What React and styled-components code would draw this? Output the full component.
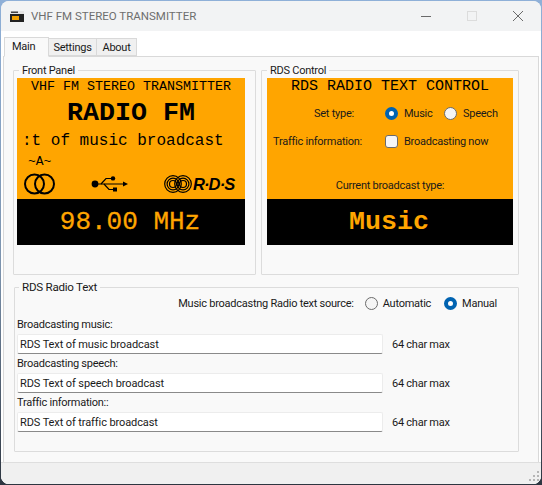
import React from 'react';
import styled, { createGlobalStyle } from 'styled-components';

const Global = createGlobalStyle`
  html, body { margin: 0; padding: 0; height: 100%; overflow: hidden; }
  body { width: 542px; height: 485px; background: linear-gradient(180deg, #8fb0d8 0%, #7c93ad 55%, #2d3540 100%); }
  * { box-sizing: border-box; }
`;

const Window = styled.div`
  width: 540px; height: 483px; margin-left: 1px; margin-top: 1px;
  display: flex; flex-direction: column; overflow: hidden;
  border-radius: 8px; background: #f3f3f3;
  font: 11px Roboto, "Liberation Sans", sans-serif; letter-spacing: -0.25px; color: #1a1a1a;
`;
const TitleBar = styled.div`
  height: 30px; flex: none; display: flex; align-items: center; padding: 0 0 0 9px; background: #f2f3f4;
`;
const Title = styled.span`
  margin-left: 7px; font-size: 11.5px; letter-spacing: 0; color: #6e6e6e; flex: 1;
`;
const WinButton = styled.div`
  width: 46px; height: 30px; display: flex; align-items: center; justify-content: center; color: ${p => p.$dim ? '#dcdcdc' : '#6a6a6a'};
`;
const Client = styled.div`
  flex: 1; display: flex; flex-direction: column; background: #fff; min-height: 0;
`;
const TabStrip = styled.div`
  height: 25px; flex: none; display: flex; align-items: flex-end; padding-left: 3px; position: relative; z-index: 1;
`;
const Tab = styled.div`
  height: ${p => p.$active ? '20px' : '18px'};
  width: ${p => p.$w}px;
  display: flex; align-items: center; justify-content: ${p => p.$active ? 'flex-start' : 'center'};
  background: ${p => p.$active ? '#f9f9f9' : '#f0f0f0'};
  border: 1px solid #d9d9d9;
  border-bottom: ${p => p.$active ? '1px solid #f9f9f9' : '1px solid #d9d9d9'};
  border-left: ${p => p.$active ? '1px solid #d9d9d9' : 'none'};
  margin-bottom: ${p => p.$active ? '-1px' : '0'};
  padding: ${p => p.$active ? '0 0 2px 7px' : '0'};
`;
const TabPanel = styled.div`
  flex: 1; margin: 0 2px; background: #f9f9f9; border: 1px solid #d9d9d9; border-bottom: none;
  padding: 7px 0 0 9px; min-height: 0; display: flex; flex-direction: column;
`;
const TopRow = styled.div`
  display: grid; grid-template-columns: 243px 258px; column-gap: 5px; height: 211px;
`;
const Group = styled.fieldset`
  margin: 0; border: 1px solid #dcdcdc; border-radius: 1px; min-width: 0; padding: 0 ${p => p.$pr ?? 10}px 0 ${p => p.$pl ?? 3}px;
`;
const Legend = styled.legend`
  padding: 0 3px; margin-left: ${p => p.$ml ?? 2}px; line-height: 13px; color: #1a1a1a;
  font-size: ${p => p.$size || 11}px;
`;
const Lcd = styled.div`
  height: 167px; margin-top: 1px; display: flex; flex-direction: column; overflow: hidden;
`;
const Amber = styled.div`
  flex: 1; background: #ffa500; display: flex; flex-direction: column; min-height: 0;
`;
const Readout = styled.div`
  height: 46px; flex: none; background: #000; color: #ffa500; display: flex; align-items: center; justify-content: center;
  font-family: "Liberation Mono", monospace; letter-spacing: 0; font-size: ${p => p.$size || 26}px; font-weight: ${p => p.$bold ? 700 : 400}; white-space: pre;
  padding: 0 2px 1px 0; -webkit-text-stroke: ${p => p.$bold ? 0 : '0.3px'};
`;
const Mono = styled.div`
  font-family: "Liberation Mono", monospace; color: #000; white-space: pre; letter-spacing: 0; text-align: ${p => p.$align || 'center'};
  font-size: ${p => p.$size}px; line-height: ${p => p.$lh}px; font-weight: ${p => p.$bold ? 700 : 400};
  padding-left: ${p => p.$pl || 0}px; margin-top: ${p => p.$mt || 0}px;
`;
const Logos = styled.div`
  display: grid; grid-template-columns: 67px 73px 1fr; align-items: center; padding-left: 7px; margin-top: 6px; height: 22px;
`;
const RdsLogo = styled.div`
  display: flex; align-items: center;
`;
const RdsWord = styled.span`
  font: italic 700 16.5px "Liberation Sans", sans-serif; color: #000; letter-spacing: -0.9px; margin-left: 1px;
`;
const ControlGrid = styled.div`
  display: grid; grid-template-columns: 118px 59px auto; row-gap: 13px; align-items: center; color: #1a1a1a; padding-top: 10px; margin-bottom: 29px;
`;
const RowLabel = styled.div`
  padding-left: ${p => p.$pl}px; line-height: 15px;
`;
const Cell = styled.div`
  display: flex; align-items: center; gap: 6px; white-space: nowrap; grid-column: ${p => p.$span ? 'span 2' : 'auto'};
`;
const RadioDot = styled.span`
  width: 13px; height: 13px; border-radius: 50%; flex: none; display: inline-block;
  background: ${p => p.$on ? '#fff' : '#f5f5f5'};
  border: ${p => p.$on ? '4px solid #0063b1' : '1px solid #6b6b6b'};
`;
const Box = styled.span`
  width: 13px; height: 13px; border-radius: 3px; background: #f6f6f6; border: 1px solid #6b6b6b; flex: none; display: inline-block;
`;
const Centered = styled.div`
  text-align: center; height: 15px; line-height: 15px;
`;
const TextGroup = styled(Group)`
  margin: 6px 0 0 1px; height: 171px; width: 505px; padding: 0 0 0 2px;
`;
const SourceRow = styled.div`
  display: flex; justify-content: flex-end; align-items: center; height: 16px; margin-top: 1px; padding-right: 21px;
`;
const Spaced = styled.span`
  margin-left: ${p => p.$ml}px; display: inline-flex; align-items: center; gap: 5px;
`;
const FieldLabel = styled.div`
  height: 17px; line-height: 15px; margin-top: ${p => p.$mt || 2}px;
`;
const FieldRow = styled.div`
  display: flex; align-items: center; gap: 9px;
`;
const FieldBox = styled.div`
  width: 366px; height: 20px; background: #fff; border: 1px solid #ececec; border-bottom: 1px solid #8a8a8a; border-radius: 2px;
  padding: 0 2px; line-height: 19px; letter-spacing: -0.1px; color: #1a1a1a;
`;
const StatusBar = styled.div`
  height: 22px; flex: none; background: #f0f0f0; border-top: 1px solid #dedede; display: flex; justify-content: flex-end; align-items: flex-end; padding: 0 1px 2px 0;
`;

const Stereo = () => (
  <svg width="32" height="22" viewBox="0 0 32 22" fill="none" stroke="#000" strokeWidth="2">
    <circle cx="10.5" cy="11" r="9.5" /><circle cx="20.5" cy="11" r="9.5" />
  </svg>
);
const Usb = () => (
  <svg width="37" height="18" viewBox="0 0 37 18" fill="#000" stroke="#000">
    <circle cx="4" cy="9" r="3.4" stroke="none" />
    <path d="M4 9H33" strokeWidth="1.2" />
    <path d="M37 9l-5-2.4v4.8z" stroke="none" />
    <path d="M10 9l5-5.5h6M13 9l5 5.5h5" strokeWidth="1.2" fill="none" />
    <circle cx="22" cy="3.4" r="2.2" stroke="none" />
    <rect x="22" y="12.5" width="4" height="4" stroke="none" />
  </svg>
);
const Rings = () => (
  <svg width="28" height="18" viewBox="0 0 28 18" fill="none" stroke="#000" strokeWidth="1.2">
    {[8.3, 5.9, 3.5].map(r => <circle key={'a' + r} cx="9" cy="9" r={r} />)}
    {[8.3, 5.9, 3.5].map(r => <circle key={'b' + r} cx="19" cy="9" r={r} />)}
  </svg>
);
const Grip = () => (
  <svg width="12" height="12" viewBox="0 0 12 12" fill="#b5b5b5">
    {[[9, 1], [5, 5], [9, 5], [1, 9], [5, 9], [9, 9]].map(([x, y]) => <rect key={x + '-' + y} x={x} y={y} width="2" height="2" />)}
  </svg>
);
const AppIcon = () => (
  <svg width="14" height="13" viewBox="0 0 14 13">
    <rect x="0" y="4" width="14" height="8" fill="#222" />
    <rect x="0" y="1" width="14" height="3" fill="#e4e4e4" />
    <rect x="1" y="1.5" width="7" height="1.5" fill="#444" />
    <rect x="2" y="6" width="7" height="4" fill="#f0a000" />
  </svg>
);

export default function App() {
  return (
    <>
      <Global />
      <Window>
        <TitleBar>
          <AppIcon />
          <Title>VHF FM STEREO TRANSMITTER</Title>
          <WinButton>
            <svg width="10" height="10"><path d="M0 5.5H10" stroke="currentColor" /></svg>
          </WinButton>
          <WinButton $dim>
            <svg width="10" height="10"><rect x="0.5" y="0.5" width="9" height="9" fill="none" stroke="currentColor" /></svg>
          </WinButton>
          <WinButton>
            <svg width="10" height="10"><path d="M0 0L10 10M10 0L0 10" stroke="currentColor" /></svg>
          </WinButton>
        </TitleBar>
        <Client>
          <TabStrip>
            <Tab $active $w={45}>Main</Tab>
            <Tab $w={48}>Settings</Tab>
            <Tab $w={40}>About</Tab>
          </TabStrip>
          <TabPanel>
            <TopRow>
              <Group>
                <Legend>Front Panel</Legend>
                <Lcd>
                  <Amber>
                    <Mono $size={13.33} $lh={18}>VHF FM STEREO TRANSMITTER</Mono>
                    <Mono $size={26.67} $lh={30} $bold $mt={2}>RADIO FM</Mono>
                    <Mono $size={16} $lh={20} $mt={3} $align="left" $pl={5}>:t of music broadcast</Mono>
                    <Mono $size={13} $lh={10} $mt={6} $align="left" $pl={11}>~A~</Mono>
                    <Logos>
                      <Stereo />
                      <Usb />
                      <RdsLogo><Rings /><RdsWord>R·D·S</RdsWord></RdsLogo>
                    </Logos>
                  </Amber>
                  <Readout>98.00 MHz</Readout>
                </Lcd>
              </Group>
              <Group $pl={5} $pr={5}>
                <Legend $ml={0}>RDS Control</Legend>
                <Lcd>
                  <Amber>
                    <Mono $size={15} $lh={18}>RDS RADIO TEXT CONTROL</Mono>
                    <ControlGrid>
                      <RowLabel $pl={47}>Set type:</RowLabel>
                      <Cell><RadioDot $on />Music</Cell>
                      <Cell><RadioDot />Speech</Cell>
                      <RowLabel $pl={6}>Traffic information:</RowLabel>
                      <Cell $span><Box />Broadcasting now</Cell>
                    </ControlGrid>
                    <Centered>Current broadcast type:</Centered>
                  </Amber>
                  <Readout $size={26.67} $bold>Music</Readout>
                </Lcd>
              </Group>
            </TopRow>
            <TextGroup>
              <Legend $size={11.6}>RDS Radio Text</Legend>
              <SourceRow>
                Music broadcastng Radio text source:
                <Spaced $ml={11}><RadioDot />Automatic</Spaced>
                <Spaced $ml={13}><RadioDot $on />Manual</Spaced>
              </SourceRow>
              <FieldLabel $mt={6}>Broadcasting music:</FieldLabel>
              <FieldRow><FieldBox>RDS Text of music broadcast</FieldBox>64 char max</FieldRow>
              <FieldLabel>Broadcasting speech:</FieldLabel>
              <FieldRow><FieldBox>RDS Text of speech broadcast</FieldBox>64 char max</FieldRow>
              <FieldLabel>Traffic information::</FieldLabel>
              <FieldRow><FieldBox>RDS Text of traffic broadcast</FieldBox>64 char max</FieldRow>
            </TextGroup>
          </TabPanel>
          <StatusBar><Grip /></StatusBar>
        </Client>
      </Window>
    </>
  );
}
